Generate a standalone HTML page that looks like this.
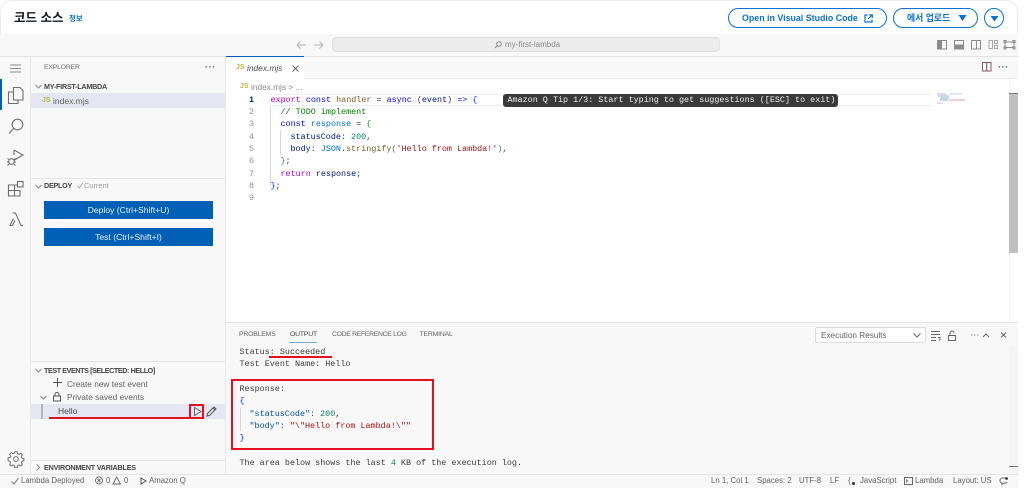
<!DOCTYPE html>
<html lang="ko">
<head>
<meta charset="utf-8">
<title>코드 소스</title>
<style>
html,body{margin:0;padding:0;width:1024px;height:493px;overflow:hidden;background:#fff}
body{position:relative;font-family:"Liberation Sans","Noto Sans CJK KR",sans-serif;color:#616161;filter:blur(.35px)}
.a{position:absolute}
.t{position:absolute;white-space:pre;line-height:12px;font-size:8.3px}
.m{position:absolute;white-space:pre;font-family:"Liberation Mono",monospace;font-size:8.42px;line-height:12px;color:#3b3b3b}
.n{position:absolute;width:30px;text-align:right;left:224px;font-family:"Liberation Mono",monospace;font-size:8.42px;line-height:12px;color:#8a8f98}
.b{font-weight:bold;color:#444;font-size:7.2px}
.js{color:#b8b83c;font-weight:bold;font-size:7px}
.tab{font-size:6.8px;letter-spacing:-.15px}
.st{font-size:7.8px}
.btn{position:absolute;border:1.5px solid #0972d3;border-radius:11px;box-sizing:border-box;color:#0972d3;font-weight:bold;font-size:8.85px;line-height:18px;text-align:center;background:#fff;white-space:pre}
.run{position:absolute;left:44px;width:169px;height:18px;background:#0060b5;color:#e8f0f8;font-size:8.6px;line-height:18px;text-align:center}
.kw{color:#af00db}.bl{color:#0000ff}.fn{color:#795e26}.v{color:#001080}.c{color:#008000}.num{color:#098658}.s{color:#a31515}.ty{color:#267f99}.br{color:#0431fa}.g{color:#319331}
svg{position:absolute;overflow:visible}
</style>
</head>
<body>
<!-- card -->
<div class="a" style="left:0;top:0;width:1018px;height:40px;border:1px solid #ececec;border-bottom:0;border-radius:12px 12px 0 0;box-sizing:border-box"></div>
<div class="a" style="left:0;top:34px;width:1018px;height:454px;background:#f8f8f8"></div>

<!-- header -->
<div class="a" style="left:14px;top:9px;font-size:12.5px;line-height:18px;font-weight:bold;color:#16191f;white-space:pre">코드 소스</div>
<div class="a" style="left:69px;top:13px;font-size:7.5px;line-height:11px;font-weight:bold;color:#0972d3">정보</div>
<div class="btn" style="left:728px;top:8px;width:159px;height:20px;text-align:left;padding-left:13px">Open in Visual Studio Code</div>
<svg style="left:864px;top:14px" width="9" height="9" viewBox="0 0 9 9" fill="none" stroke="#0972d3" stroke-width="1.2"><path d="M3.5 1H1v7h7V5.5M4 5l4.300-4.300M5 .8h3.300V4"/></svg>
<div class="btn" style="left:893px;top:8px;width:85px;height:20px;text-align:left;padding-left:13px">에서 업로드</div>
<svg style="left:958px;top:14px" width="9" height="8"><path d="M.5 1h8L4.500 7z" fill="#0972d3"/></svg>
<div class="btn" style="left:984px;top:8px;width:20px;height:20px;border-radius:50%"></div>
<svg style="left:990px;top:15px" width="9" height="7"><path d="M.5 1h8L4.500 6.500z" fill="#0972d3"/></svg>

<!-- title bar -->
<div class="a" style="left:0;top:56px;width:1018px;height:1px;background:#e5e5e5"></div>
<svg style="left:296px;top:40px" width="30" height="10" fill="none" stroke="#b5b5b5" stroke-width="1"><path d="M1 5h9M1 5l3.500-3.500M1 5l3.500 3.500M18 5h9M27 5l-3.500-3.500M27 5l-3.500 3.500"/></svg>
<div class="a" style="left:332px;top:37px;width:388px;height:15px;background:#ececec;border:1px solid #e2e2e2;border-radius:4px;box-sizing:border-box"></div>
<div class="t" style="left:505px;top:39px;color:#8a8a8a;font-size:8px">my-first-lambda</div>
<svg style="left:494px;top:41px" width="8" height="8" fill="none" stroke="#8a8a8a"><circle cx="5" cy="3" r="2.300"/><path d="M3.300 4.700L1 7"/></svg>
<svg style="left:937px;top:40px" width="78" height="10" fill="none" stroke="#8c8c8c" stroke-width="1">
<rect x=".5" y=".5" width="9" height="8.500"/><rect x="1" y="1" width="3.500" height="7.500" fill="#8c8c8c"/>
<rect x="17.500" y=".5" width="9" height="8.500"/><rect x="18" y="5" width="8" height="3.500" fill="#8c8c8c"/>
<rect x="34.500" y=".5" width="9" height="8.500"/><path d="M39.500 1v8"/>
<rect x="52" y=".5" width="3.500" height="8" stroke="#a8a8a8"/><rect x="57.500" y=".5" width="3" height="3" stroke="#a8a8a8"/><rect x="57.500" y="5.500" width="3" height="3" stroke="#a8a8a8"/>
<path d="M68 2h9v5.500h-9zM67 .5h2v2h-2zM76 .5h2v2h-2zM67 7h2v2h-2zM76 7h2v2h-2z"/>
</svg>

<!-- activity bar -->
<div class="a" style="left:30px;top:57px;width:1px;height:417px;background:#e8e8e8"></div>
<svg style="left:0;top:60px" width="30" height="180" fill="none" stroke="#6e6e6e" stroke-width="1">
<path d="M10 5h11M10 8.500h11M10 12h11" stroke="#8a8a8a"/>
<path d="M13.500 27.500h6.500l3 3v9.500h-9.500zM13.500 32H8.500v11.500h9.500V40" stroke-width="1.100"/>
<circle cx="17.500" cy="64.500" r="5.300" stroke-width="1.100"/><path d="M13.500 68.500L9 73.500" stroke-width="1.100"/>
<path d="M14 90l9 5-8.500 5" stroke-width="1.100"/><path d="M14 90v5" stroke-width="1.100"/><circle cx="11.500" cy="101.500" r="2.800" stroke-width="1.100"/><path d="M7.500 98.500l1.500 1M15.500 98.500l-1.500 1M7 102h1.500M14.500 102H16M7.500 105.500l1.500-1.500M15.500 105.500l-1.500-1.500"/>
<path d="M8.500 125h6v5.500h-6zM14.500 130.500h5.500v5.500h-5.500zM8.500 130.500h6v5.500h-6zM14.500 125h3" stroke-width="1.100"/><rect x="17.500" y="121.500" width="5.500" height="5.500" stroke-width="1.100"/>
<path d="M12.500 153h3l5.500 12.500h2M15.500 153M13.500 158.500l-3.500 7h2.500l2.500-5" stroke-width="1.100"/>
</svg>
<div class="a" style="left:0;top:79px;width:1.500px;height:31px;background:#005fb8"></div>
<svg style="left:8px;top:451px" width="16" height="16" viewBox="0 0 16 16" fill="none" stroke="#6e6e6e" stroke-width="1"><circle cx="8" cy="8" r="2.400"/><path d="M6.800 .8h2.400l.4 2 1.300.6 1.800-1.100 1.700 1.700-1.100 1.800.6 1.300 2 .4v2.400l-2 .4-.6 1.300 1.100 1.800-1.700 1.700-1.800-1.100-1.300.6-.4 2H6.800l-.4-2-1.300-.6-1.800 1.100-1.700-1.700 1.100-1.800-.6-1.300-2-.4V6.800l2-.4.6-1.300-1.100-1.800 1.700-1.700 1.800 1.100 1.300-.6z"/></svg>

<!-- sidebar -->
<div class="a" style="left:225px;top:57px;width:1px;height:417px;background:#e8e8e8"></div>
<div class="t" style="left:44px;top:62px;font-size:6.8px;letter-spacing:-.15px;color:#6a6a6a">EXPLORER</div>
<div class="t" style="left:205px;top:61px;color:#555;font-size:9px;letter-spacing:.6px;font-weight:bold">···</div>
<svg style="left:35px;top:84px" width="7" height="6" fill="none" stroke="#888"><path d="M.5 1L3.500 4 6.500 1"/></svg>
<div class="t b" style="left:44px;top:81px;letter-spacing:-.25px">MY-FIRST-LAMBDA</div>
<div class="a" style="left:31px;top:93px;width:194px;height:15px;background:#e4e6f1"></div>
<div class="t js" style="left:42px;top:95px">JS</div>
<div class="t" style="left:53px;top:95px;font-size:8.500px">index.mjs</div>

<div class="a" style="left:31px;top:178px;width:194px;height:1px;background:#e5e5e5"></div>
<svg style="left:35px;top:184px" width="7" height="6" fill="none" stroke="#888"><path d="M.5 1L3.500 4 6.500 1"/></svg>
<div class="t b" style="left:44px;top:180px;letter-spacing:-.25px">DEPLOY</div>
<svg style="left:77px;top:182px" width="7" height="7" fill="none" stroke="#aaa"><path d="M.5 4L2.500 6 6 .5"/></svg>
<div class="t" style="left:84px;top:180px;font-size:7.400px;color:#9a9a9a">Current</div>
<div class="run" style="top:200.500px">Deploy (Ctrl+Shift+U)</div>
<div class="run" style="top:227.500px">Test (Ctrl+Shift+I)</div>

<div class="a" style="left:31px;top:361px;width:194px;height:1px;background:#e5e5e5"></div>
<svg style="left:35px;top:368px" width="7" height="6" fill="none" stroke="#888"><path d="M.5 1L3.500 4 6.500 1"/></svg>
<div class="t b" style="left:44px;top:364.500px;letter-spacing:-.42px">TEST EVENTS [SELECTED: HELLO]</div>
<svg style="left:53px;top:378px" width="9" height="9" stroke="#555"><path d="M4.500 0v9M0 4.500h9"/></svg>
<div class="t" style="left:67px;top:377.500px">Create new test event</div>
<svg style="left:40px;top:395px" width="7" height="6" fill="none" stroke="#888"><path d="M.5 1L3.500 4 6.500 1"/></svg>
<svg style="left:53px;top:392px" width="9" height="10" fill="none" stroke="#555"><rect x=".5" y="4" width="7" height="5"/><path d="M2 4V2.500a2 2 0 0 1 4 0V4"/></svg>
<div class="t" style="left:67px;top:391px">Private saved events</div>
<div class="a" style="left:31px;top:404px;width:194px;height:15px;background:#e4e6f1"></div>
<div class="a" style="left:41px;top:404px;width:1.500px;height:15px;background:#b5b5b5"></div>
<div class="t" style="left:58px;top:405px;font-size:8.500px;color:#4a4a4a">Hello</div>
<svg style="left:193px;top:406px" width="9" height="11" fill="none" stroke="#666"><path d="M1.500 1.500L8 5.500 1.500 9.500z"/></svg>
<svg style="left:206px;top:406px" width="11" height="11" fill="none" stroke="#555"><path d="M1 10l.7-2.700L8 1l2 2-6.300 6.300z"/><path d="M7 2l2 2" /></svg>
<div class="a" style="left:49px;top:417px;width:140px;height:2px;background:#e3121f"></div>
<div class="a" style="left:189px;top:404px;width:15px;height:15px;border:2px solid #e3121f;box-sizing:border-box"></div>

<div class="a" style="left:31px;top:460px;width:194px;height:1px;background:#e5e5e5"></div>
<svg style="left:35px;top:464px" width="6" height="7" fill="none" stroke="#888"><path d="M1.500 .5L4.500 3.500 1.500 6.500"/></svg>
<div class="t b" style="left:44px;top:462px;letter-spacing:-.2px">ENVIRONMENT VARIABLES</div>

<!-- tabs -->
<div class="a" style="left:226px;top:56px;width:78px;height:23px;background:#fff;border-top:1px solid #005fb8;box-sizing:border-box"></div>
<div class="a" style="left:226px;top:78px;width:792px;height:1px;background:#eee"></div>
<div class="a" style="left:226px;top:57px;width:78px;height:22px;background:#fff"></div>
<div class="t js" style="left:236px;top:62px">JS</div>
<div class="t" style="left:247px;top:62px;font-size:8.400px;font-style:italic;color:#4a4a4a">index.mjs</div>
<svg style="left:291.500px;top:65px" width="7" height="7" stroke="#666"><path d="M.5 .5l6 6M6.500 .5l-6 6"/></svg>
<svg style="left:982px;top:62px" width="10" height="10" fill="none" stroke="#8a5a70"><rect x=".5" y=".5" width="8.500" height="8.500" /><path d="M4.700 .5v8.500" stroke="#555"/></svg>
<div class="t" style="left:998px;top:61px;color:#555;font-size:9px;letter-spacing:.6px;font-weight:bold">···</div>

<!-- editor -->
<div class="a" style="left:226px;top:79px;width:792px;height:243px;background:#fff"></div>
<div class="t js" style="left:240px;top:81px">JS</div>
<div class="t" style="left:251px;top:81px;font-size:8.300px;color:#888">index.mjs &gt; ...</div>
<div class="a" style="left:270px;top:94px;width:662px;height:12px;border:1px solid #eee;border-width:1px 0;box-sizing:border-box"></div>
<div class="a" style="left:270px;top:106px;width:1px;height:80px;background:#d8d8d8"></div>
<div class="a" style="left:280px;top:130px;width:1px;height:25px;background:#d8d8d8"></div>
<div class="n" style="top:94px;color:#0b216f;font-weight:bold">1</div>
<div class="n" style="top:106px">2</div>
<div class="n" style="top:118px">3</div>
<div class="n" style="top:131px">4</div>
<div class="n" style="top:143px">5</div>
<div class="n" style="top:155px">6</div>
<div class="n" style="top:168px">7</div>
<div class="n" style="top:180px">8</div>
<div class="n" style="top:192px">9</div>
<div class="m" style="left:270.500px;top:94px"><span class="kw">export</span> <span class="bl">const</span> <span class="fn">handler</span> = <span class="bl">async</span> (<span class="v">event</span>) <span class="bl">=&gt;</span> <span class="br">{</span></div>
<div class="m" style="left:280.500px;top:106px;color:#008000">// TODO implement</div>
<div class="m" style="left:280.500px;top:118px"><span class="bl">const</span> <span class="ty" style="color:#0070c1">response</span> = <span class="g">{</span></div>
<div class="m" style="left:290.500px;top:131px"><span class="v">statusCode</span>: <span class="num">200</span>,</div>
<div class="m" style="left:290.500px;top:143px"><span class="v">body</span>: <span class="ty" style="color:#0070c1">JSON</span>.<span class="fn">stringify</span><span class="g">(</span><span class="s">'Hello from Lambda!'</span><span class="g">)</span>,</div>
<div class="m" style="left:280.500px;top:155px"><span class="g">}</span>;</div>
<div class="m" style="left:280.500px;top:168px"><span class="kw">return</span> <span class="v">response</span>;</div>
<div class="m" style="left:270.500px;top:180px"><span class="br">}</span>;</div>
<div class="a" style="left:503px;top:93.500px;width:335px;height:13px;background:#3a3a3a;border-radius:3px"></div>
<div class="m" style="left:507.500px;top:94px;color:#eee">Amazon Q Tip 1/3: Start typing to get suggestions ([ESC] to exit)</div>
<svg style="left:937px;top:93px" width="32" height="12"><path d="M0 1h9" stroke="#c8a8e0"/><path d="M1 3h11" stroke="#9ab0e0"/><path d="M3 5h9" stroke="#78b8a8"/><path d="M3 7h8" stroke="#88a8d8"/><path d="M12 7h16" stroke="#e0a0a0"/><path d="M0 10h6" stroke="#c0c0e0"/><path d="M13 1h12" stroke="#c0c8f0"/></svg>
<div class="a" style="left:1009px;top:79px;width:1px;height:243px;background:#eee"></div>
<div class="a" style="left:1009px;top:93px;width:9px;height:160px;background:#bfbfbf"></div>
<div class="a" style="left:1009px;top:93px;width:9px;height:1px;background:#777"></div>

<!-- panel -->
<div class="a" style="left:226px;top:322px;width:792px;height:1px;background:#e5e5e5"></div>
<div class="a" style="left:226px;top:323px;width:792px;height:151px;background:#f8f8f8"></div>
<div class="t tab" style="left:239px;top:329px">PROBLEMS</div>
<div class="t tab" style="left:290px;top:329px;color:#3b3b3b">OUTPUT</div>
<div class="a" style="left:289px;top:342px;width:28px;height:1px;background:#7aa7d0"></div>
<div class="t tab" style="left:332px;top:329px;letter-spacing:-.28px">CODE REFERENCE LOG</div>
<div class="t tab" style="left:419.500px;top:329px">TERMINAL</div>
<div class="a" style="left:815px;top:327px;width:111px;height:16px;background:#fff;border:1px solid #dcdcdc;border-radius:2px;box-sizing:border-box"></div>
<div class="t" style="left:821px;top:329.500px;font-size:8.200px">Execution Results</div>
<svg style="left:913px;top:333px" width="8" height="5" fill="none" stroke="#666"><path d="M.5 .5L4 4 7.500 .5"/></svg>
<svg style="left:931px;top:331px" width="72" height="10" fill="none" stroke="#666"><path d="M0 .5h9M0 3.500h9M0 6.500h5M0 9.500h5M7 6.500h2v2l-1 1"/><rect x="17.500" y="4.500" width="7" height="5"/><path d="M19 4.500V2a2 2 0 0 1 4 0"/><path d="M40.500 4h.8M43.500 4h.8M46.500 4h.8" stroke-width="1.200"/><path d="M52 6l3-3 3 3"/><path d="M75 1.500l-5 5M70 1.500l5 5"/></svg>
<div class="m" style="left:239.500px;top:346px">Status: Succeeded</div>
<div class="a" style="left:269px;top:356px;width:63px;height:2px;background:#e3121f"></div>
<div class="m" style="left:239.500px;top:358px">Test Event Name: Hello</div>
<div class="m" style="left:239.500px;top:383px">Response:</div>
<div class="m" style="left:239.500px;top:395px;color:#0431fa">{</div>
<div class="m" style="left:249.500px;top:408px"><span style="color:#0451a5">"statusCode"</span>: <span class="num">200</span>,</div>
<div class="m" style="left:249.500px;top:420px"><span style="color:#0451a5">"body"</span>: <span class="s">"\"Hello from Lambda!\""</span></div>
<div class="m" style="left:239.500px;top:432px;color:#0431fa">}</div>
<div class="a" style="left:240px;top:407px;width:1px;height:24px;background:#d8d8d8"></div>
<div class="m" style="left:239.500px;top:457px">The area below shows the last <span class="num">4</span> KB of the execution log.</div>
<div class="a" style="left:231px;top:379px;width:203px;height:71px;border:2px solid #e3121f;box-sizing:border-box"></div>
<div class="a" style="left:1009px;top:346px;width:9px;height:128px;background:#f4f4f4"></div>
<div class="a" style="left:1009px;top:466px;width:9px;height:1px;background:#777"></div>

<!-- status bar -->
<div class="a" style="left:0;top:474px;width:1018px;height:1px;background:#e5e5e5"></div>
<svg style="left:11px;top:477px" width="8" height="8" fill="none" stroke="#777"><path d="M.5 4.500L3 7 7.500 1"/></svg>
<div class="t st" style="left:21px;top:475px">Lambda Deployed</div>
<svg style="left:95px;top:476px" width="32" height="9" fill="none" stroke="#666" stroke-width=".9"><circle cx="4" cy="4.500" r="3.500"/><path d="M2.500 3l3 3M5.500 3l-3 3"/><path d="M18 8h7.500L21.700 1z"/></svg>
<div class="t st" style="left:106px;top:475px">0</div>
<div class="t st" style="left:124px;top:475px">0</div>
<svg style="left:140px;top:477px" width="7" height="8" fill="none" stroke="#555"><path d="M1 1l5 3-5 3z"/></svg>
<div class="t st" style="left:149px;top:475px">Amazon Q</div>
<div class="t st" style="left:711px;top:475px">Ln 1, Col 1</div>
<div class="t st" style="left:757px;top:475px">Spaces: 2</div>
<div class="t st" style="left:799px;top:475px">UTF-8</div>
<div class="t st" style="left:830px;top:475px">LF</div>
<div class="t st" style="left:848px;top:475px">{</div>
<div class="a" style="left:852px;top:482px;width:3px;height:3px;background:#333;border-radius:50%"></div>
<div class="t st" style="left:860px;top:475px">JavaScript</div>
<svg style="left:904px;top:477px" width="9" height="8" fill="none" stroke="#666"><rect x=".5" y=".5" width="8" height="7"/><path d="M2 2.500l1.500 1.500L2 5.500"/></svg>
<div class="t st" style="left:915px;top:475px">Lambda</div>
<div class="t st" style="left:953px;top:475px">Layout: US</div>
<svg style="left:1000px;top:477px" width="8" height="8" fill="none" stroke="#666"><path d="M5 1H3a2.500 2.500 0 0 0-1 5v1.500l2-1.500h2a2 2 0 0 0 1-1"/><circle cx="6.500" cy="1.500" r="1.400" fill="#333" stroke="none"/></svg>
</body>
</html>
